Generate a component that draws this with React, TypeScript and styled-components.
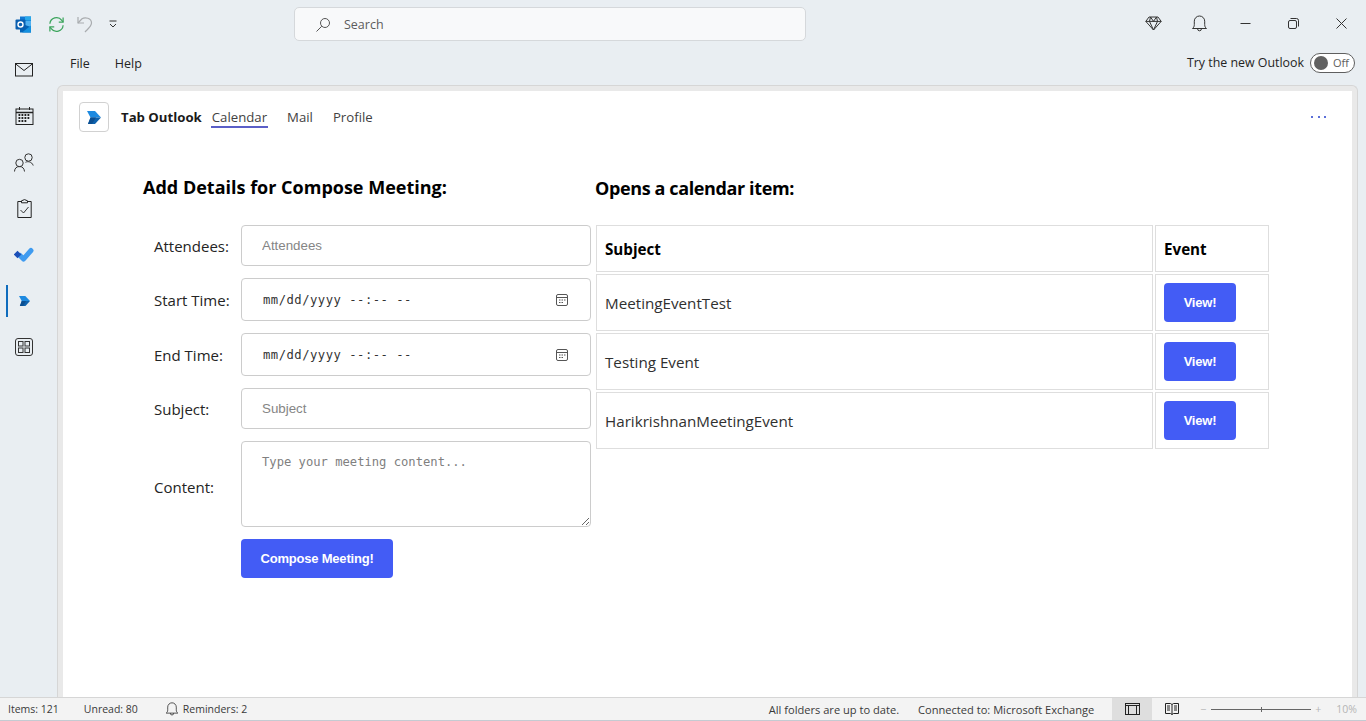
import React from "react";
import styled, { createGlobalStyle } from "styled-components";

const UI_FONT = `"Open Sans", "Noto Sans", "Liberation Sans", sans-serif`;

const GlobalStyle = createGlobalStyle`
  html, body {
    margin: 0;
    padding: 0;
    height: 100%;
    overflow: hidden;
    background: #e9eef2;
    font-family: ${UI_FONT};
  }
  * { box-sizing: border-box; }
`;

const Shell = styled.div`
  width: 1366px;
  height: 721px;
  display: flex;
  flex-direction: column;
  background: #e9eef2;
  color: #242424;
`;

const TitleBar = styled.header`
  height: 44px;
  flex: none;
  display: grid;
  grid-template-columns: 294px 512px 1fr;
  align-items: center;
`;

const QuickAccess = styled.div`
  display: flex;
  align-items: center;
  padding: 4px 0 0 15px;
  svg { display: block; flex: none; }
`;

const QuickSlot = styled.span<{ $gap: number }>`
  margin-right: ${(p) => p.$gap}px;
`;

const SearchBox = styled.div`
  height: 34px;
  margin-top: 4px;
  padding-top: 1px;
  background: #f8f9fa;
  border: 1px solid #d5d8db;
  border-radius: 5px;
  display: flex;
  align-items: center;
  padding-left: 20px;
  gap: 13px;
  font-size: 12.5px;
  color: #5c5c5c;
`;

const WindowControls = styled.div`
  display: flex;
  justify-content: flex-end;
  align-items: center;
  padding: 3px 19px 0 0;
  gap: 37px;
  svg { display: block; }
`;

const TightSlot = styled.span<{ $pull: number }>`
  margin-right: -${(p) => p.$pull}px;
`;

const Body = styled.div`
  flex: 1;
  min-height: 0;
  display: flex;
`;

const Rail = styled.nav`
  width: 57px;
  flex: none;
  display: flex;
  flex-direction: column;
  padding-top: 3px;
`;

const RailItem = styled.div<{ $active?: boolean }>`
  width: 48px;
  height: 46.2px;
  position: relative;
  display: flex;
  align-items: center;
  justify-content: center;
  svg { display: block; }
  ${(p) =>
    p.$active &&
    `&::before {
      content: "";
      position: absolute;
      left: 6px;
      top: 7px;
      width: 2px;
      height: 32px;
      background: #0f6cbd;
    }`}
`;

const Main = styled.div`
  flex: 1;
  min-width: 0;
  display: flex;
  flex-direction: column;
  padding-right: 8px;
`;

const MenuRow = styled.div`
  height: 41px;
  flex: none;
  display: flex;
  align-items: center;
  padding-left: 13px;
  padding-bottom: 3px;
  font-size: 12.5px;
`;

const MenuItem = styled.span`
  margin-right: 25px;
`;

const TryOutlook = styled.div`
  margin-left: auto;
  display: flex;
  align-items: center;
  gap: 6px;
  margin-right: 3px;
  padding-bottom: 1px;
  font-size: 12.4px;
`;

const Toggle = styled.div`
  width: 45px;
  height: 20px;
  border: 1px solid #5f5f5f;
  border-radius: 10px;
  background: #fff;
  display: flex;
  align-items: center;
  padding-left: 3px;
  gap: 5px;
  font-size: 11px;
  color: #616161;
  &::before {
    content: "";
    width: 14px;
    height: 14px;
    border-radius: 50%;
    background: #616161;
  }
`;

const Frame = styled.div`
  flex: 1;
  min-height: 0;
  background: #e9e9e9;
  border: 1px solid #d6d6d6;
  border-bottom: none;
  border-radius: 6px 6px 0 0;
  padding: 5px 5px 0;
  display: flex;
`;

const TabPage = styled.main`
  flex: 1;
  background: #fff;
  display: flex;
  flex-direction: column;
`;

const TabHeader = styled.div`
  height: 52px;
  flex: none;
  display: flex;
  align-items: center;
  padding: 0 26px 0 16px;
`;

const AppTile = styled.div`
  width: 30px;
  height: 30px;
  border: 1px solid #d1d1d1;
  border-radius: 4px;
  display: flex;
  align-items: center;
  justify-content: center;
  margin-right: 12px;
`;

const AppName = styled.span`
  font-size: 13.2px;
  font-weight: 700;
  margin-right: 10px;
  color: #1a1a1a;
`;

const Tab = styled.span<{ $active?: boolean }>`
  position: relative;
  font-size: 13.2px;
  margin-right: 20px;
  color: #424242;
  ${(p) =>
    p.$active &&
    `&::after {
      content: "";
      position: absolute;
      left: -1px;
      right: -1px;
      bottom: -2px;
      height: 2px;
      background: #5b5fc7;
    }`}
`;

const MoreDots = styled.span`
  margin-left: auto;
  display: flex;
  gap: 4.5px;
  i {
    width: 2px;
    height: 2px;
    background: #5b6fd8;
  }
`;

const Content = styled.div`
  display: grid;
  grid-template-columns: 453px 673px;
  padding: 32px 0 0 80px;
`;

const Heading = styled.h2`
  margin: 0;
  height: 50px;
  font-size: 18px;
  line-height: 24px;
  font-weight: 700;
  color: #000;
`;

const RightHeading = styled(Heading)`
  margin-left: -1px;
  margin-top: 1px;
  height: 49px;
  letter-spacing: -0.38px;
`;

const Form = styled.form`
  display: grid;
  grid-template-columns: 98px 350px;
  row-gap: 12px;
  align-items: center;
`;

const Label = styled.label<{ $drop?: number }>`
  padding: ${(p) => p.$drop ?? 0}px 0 0 11px;
  font-size: 15px;
  color: #242424;
`;

const Field = styled.input`
  width: 350px;
  height: 41px;
  border: 1px solid #ccc;
  border-radius: 4px;
  padding: 0 20px;
  background: #fff;
  font-family: "Liberation Sans", sans-serif;
  font-size: 13.33px;
  &::placeholder { color: #858585; opacity: 1; }
`;

const DateBox = styled.div`
  width: 350px;
  height: 43px;
  border: 1px solid #ccc;
  border-radius: 4px;
  background: #fff;
  padding: 0 22px 0 21px;
  display: flex;
  align-items: center;
  justify-content: space-between;
  font-family: "DejaVu Sans Mono", monospace;
  font-size: 12.2px;
  letter-spacing: 0.5px;
  white-space: pre;
  color: #333;
  svg { display: block; }
`;

const Area = styled.textarea`
  width: 350px;
  height: 86px;
  display: block;
  border: 1px solid #ccc;
  border-radius: 4px;
  padding: 13px 20px;
  background: #fff;
  font-family: "DejaVu Sans Mono", monospace;
  font-size: 12.17px;
  &::placeholder { color: #808080; opacity: 1; }
`;

const PrimaryButton = styled.button<{ $w: number }>`
  width: ${(p) => p.$w}px;
  height: 39px;
  border: none;
  border-radius: 4px;
  background: #435cf5;
  color: #fff;
  font-family: "Liberation Sans", sans-serif;
  font-size: 13px;
  letter-spacing: -0.2px;
  font-weight: 700;
  padding: 0;
`;

const Table = styled.div`
  display: grid;
  grid-template-columns: 557px 114px;
  grid-template-rows: 47px;
  grid-auto-rows: 57px;
  gap: 2px;
`;

const Cell = styled.div<{ $head?: boolean }>`
  border: 1px solid #dedede;
  display: flex;
  align-items: center;
  padding: 0 8px;
  font-size: 15.2px;
  font-weight: ${(p) => (p.$head ? 700 : 400)};
  color: ${(p) => (p.$head ? "#000" : "#303030")};
`;

const StatusBar = styled.footer`
  height: 24px;
  flex: none;
  background: #f3f3f3;
  border-top: 1px solid #d6d6d6;
  border-bottom: 1px solid #c4cbd2;
  display: flex;
  align-items: center;
  padding-left: 8px;
  font-size: 10.5px;
  color: #3a3a3a;
  svg { display: block; flex: none; }
`;

const StatusText = styled.span<{ $gap?: number }>`
  margin-right: ${(p) => p.$gap ?? 0}px;
  display: flex;
  align-items: center;
  gap: 4px;
`;

const StatusRight = styled.div`
  margin-left: auto;
  display: flex;
  align-items: center;
  font-size: 11.1px;
`;

const ViewButton = styled.div<{ $on?: boolean }>`
  width: 40px;
  height: 22px;
  display: flex;
  align-items: center;
  justify-content: center;
  background: ${(p) => (p.$on ? "#dedede" : "transparent")};
`;

const Zoom = styled.div`
  display: flex;
  align-items: center;
  padding: 0 9px 0 8px;
  color: #b5b5b5;
  font-size: 10.5px;
`;

const ZoomPercent = styled.span`
  margin-left: 15px;
`;

const ZoomTrack = styled.div`
  width: 100px;
  height: 1px;
  background: #666;
  margin: 0 4px 0 5px;
  position: relative;
  &::after {
    content: "";
    position: absolute;
    left: 50px;
    top: -2px;
    width: 1px;
    height: 5px;
    background: #666;
  }
`;

const OutlookLogo = () => (
  <svg width="17" height="17" viewBox="0 0 17 17">
    <rect x="5" y="0.5" width="11" height="8" fill="#0f78d4" />
    <rect x="10" y="0.5" width="6" height="4" fill="#28a8ea" />
    <rect x="5" y="8" width="11" height="8.5" fill="#0364b8" />
    <path d="M10 5h6v6l-6-2z" fill="#50b0f0" />
    <path d="M7 16.5l9-7v7z" fill="#1490df" />
    <rect x="0.5" y="3.5" width="10" height="10" rx="1" fill="#0a5fb0" />
    <circle cx="5.5" cy="8.5" r="2.5" fill="none" stroke="#fff" strokeWidth="1.4" />
  </svg>
);

const SyncIcon = () => (
  <svg width="17" height="17" viewBox="0 0 18 18" fill="none" stroke="#3aa45b" strokeWidth="1.3">
    <path d="M2 8.2A7 7 0 0 1 14.6 4.6L16 6.2" />
    <path d="M16 1.6v4.8h-4.6" />
    <path d="M16 9.8A7 7 0 0 1 3.4 13.4L2 11.8" />
    <path d="M2 16.4v-4.8h4.6" />
  </svg>
);

const UndoIcon = () => (
  <svg width="16" height="17" viewBox="0 0 16 17" fill="none" stroke="#a9acaf" strokeWidth="1.2">
    <path d="M1 1v6h6" />
    <path d="M1 7L5 2.8C8 0.8 14.5 2 14.5 7c0 3-2.5 5-6.5 9" />
  </svg>
);

const QatMore = () => (
  <svg width="8" height="8" viewBox="0 0 8 8" fill="none" stroke="#333" strokeWidth="1">
    <path d="M0.5 1h7" />
    <path d="M1 4l3 3 3-3" />
  </svg>
);

const SearchIcon = () => (
  <svg width="16" height="16" viewBox="0 0 16 16" fill="none" stroke="#555" strokeWidth="1">
    <circle cx="10" cy="6" r="4.5" />
    <path d="M6.8 9.2L1.5 14.5" />
  </svg>
);

const GemIcon = () => (
  <svg width="17" height="15" viewBox="0 0 17 15" fill="none" stroke="#333" strokeWidth="1">
    <path d="M4 1h9l3.2 4.4L8.500 14 0.800 5.400z" />
    <path d="M0.800 5.400h15.400M5.500 1L4.500 5.400 8.500 14l4-8.600L11.500 1M5.500 1l3 4.400 3-4.400" />
  </svg>
);

const BellIcon = ({ size = 17 }: { size?: number }) => (
  <svg width={size} height={size} viewBox="0 0 17 17" fill="none" stroke="#333" strokeWidth="1">
    <path d="M1.500 13.500c1.200-1 1.800-2 1.800-4V6.200a5.200 5.200 0 0 1 10.400 0V9.500c0 2 .6 3 1.800 4z" />
    <path d="M6.500 13.500a2 2.300 0 0 0 4 0" />
  </svg>
);

const MinimizeIcon = () => (
  <svg width="11" height="11" viewBox="0 0 11 11" stroke="#333">
    <path d="M0.500 5.500h10" />
  </svg>
);

const RestoreIcon = () => (
  <svg width="11" height="11" viewBox="0 0 11 11" fill="none" stroke="#333">
    <rect x="0.500" y="2.500" width="8" height="8" rx="1.500" />
    <path d="M2.500 0.500h6a2 2 0 0 1 2 2v6" />
  </svg>
);

const CloseIcon = () => (
  <svg width="11" height="11" viewBox="0 0 11 11" stroke="#333">
    <path d="M0.500 0.500l10 10M10.500 0.500l-10 10" />
  </svg>
);

const MailIcon = () => (
  <svg width="18" height="14" viewBox="0 0 18 14" fill="none" stroke="#222" strokeWidth="1">
    <rect x="0.500" y="0.500" width="17" height="12.500" />
    <path d="M0.500 0.800L9 7.500l8.500-6.700" />
  </svg>
);

const CalendarIcon = () => (
  <svg width="19" height="18" viewBox="0 0 19 18" fill="none" stroke="#222" strokeWidth="1">
    <rect x="1" y="2" width="17" height="15.500" />
    <path d="M1 5.500h17" strokeWidth="1.500" />
    <path d="M4.500 0v3M14.500 0v3" />
    <path d="M3.500 8h12M3.500 11h12M3.500 14h9" strokeWidth="1.800" strokeDasharray="1.800 1.200" />
  </svg>
);

const PeopleIcon = () => (
  <svg width="20" height="19" viewBox="0 0 20 19" fill="none" stroke="#333" strokeWidth="1">
    <circle cx="5.500" cy="10" r="3.700" />
    <path d="M0.500 18.500c0-3 2-5 5-5s4.800 2 5 5" />
    <circle cx="14.500" cy="4.500" r="3.700" />
    <path d="M11.500 9.300c2-1.200 6.300-.8 7.700 3.200" />
  </svg>
);

const TasksIcon = () => (
  <svg width="15" height="19" viewBox="0 0 15 19" fill="none" stroke="#222" strokeWidth="1">
    <path d="M4.500 2.500H0.800v16h13.400v-16h-3.700" />
    <path d="M4.500 3.800V1.800L7.500 0.600l3 1.200v2z" />
    <path d="M3.500 11l3 3 5-6" strokeWidth="0.900" />
  </svg>
);

const TodoIcon = () => (
  <svg width="21" height="17" viewBox="0 0 21 17">
    <path d="M6 9.500L9.500 13L17 4.500" fill="none" stroke="#3f9bf0" strokeWidth="5" strokeLinecap="round" strokeLinejoin="round" />
    <path d="M3.500 4.700L7.300 8.500 3.500 12.300-0.300 8.500z" fill="#1b4fb8" />
  </svg>
);

const TabAppIcon = ({ size = 14 }: { size?: number }) => (
  <svg width={size} height={size * 13 / 14} viewBox="0 0 14 13">
    <path d="M0 0h8l6 6.500H3.500z" fill="#1e8ae0" />
    <path d="M3.500 6.500H14L8 13H1z" fill="#0f62ad" />
    <path d="M3.500 6.500H9L5 13H1z" fill="#0b4f92" />
  </svg>
);

const AppsIcon = () => (
  <svg width="18" height="18" viewBox="0 0 18 18" fill="none" stroke="#333" strokeWidth="1">
    <rect x="0.500" y="0.500" width="17" height="17" rx="2.500" />
    <rect x="3.500" y="3.500" width="4.500" height="4.500" />
    <rect x="10" y="3.500" width="4.500" height="4.500" />
    <rect x="3.500" y="10" width="4.500" height="4.500" />
    <rect x="10" y="10" width="4.500" height="4.500" />
  </svg>
);

const DatePickerIcon = () => (
  <svg width="12" height="12" viewBox="0 0 12 12" fill="none" stroke="#555">
    <rect x="0.500" y="0.500" width="11" height="11" rx="1.500" />
    <path d="M0.500 3.500h11" />
    <path d="M3 6h1.500M5.500 6H7M8 6h1.500M3 8.500h1.500M5.500 8.500H7" />
  </svg>
);

const NormalViewIcon = () => (
  <svg width="15" height="12" viewBox="0 0 15 12" fill="none" stroke="#222">
    <rect x="0.500" y="0.500" width="14" height="11" />
    <path d="M0.500 2.500h14M3.500 2.500v9M11.500 2.500v9" />
  </svg>
);

const ReadingViewIcon = () => (
  <svg width="14" height="12" viewBox="0 0 14 12" fill="none" stroke="#222">
    <path d="M0.500 0.500h5l1.500 1 1.500-1h5v10h-5L7 11.500 5.500 10.500h-5zM7 1.500v10" />
    <path d="M2 3h3M2 5h3M2 7h3M9 3h3M9 5h3M9 7h3" />
  </svg>
);

const rows = ["MeetingEventTest", "Testing Event", "HarikrishnanMeetingEvent"];

export default function App() {
  return (
    <>
      <GlobalStyle />
      <Shell>
        <TitleBar>
          <QuickAccess>
            <QuickSlot $gap={16}><OutlookLogo /></QuickSlot>
            <QuickSlot $gap={12}><SyncIcon /></QuickSlot>
            <QuickSlot $gap={16}><UndoIcon /></QuickSlot>
            <QatMore />
          </QuickAccess>
          <SearchBox>
            <SearchIcon />
            Search
          </SearchBox>
          <WindowControls>
            <TightSlot $pull={8}><GemIcon /></TightSlot>
            <TightSlot $pull={5}><BellIcon /></TightSlot>
            <MinimizeIcon />
            <RestoreIcon />
            <CloseIcon />
          </WindowControls>
        </TitleBar>
        <Body>
          <Rail>
            <RailItem><MailIcon /></RailItem>
            <RailItem><CalendarIcon /></RailItem>
            <RailItem><PeopleIcon /></RailItem>
            <RailItem><TasksIcon /></RailItem>
            <RailItem><TodoIcon /></RailItem>
            <RailItem $active><TabAppIcon size={11} /></RailItem>
            <RailItem><AppsIcon /></RailItem>
          </Rail>
          <Main>
            <MenuRow>
              <MenuItem>File</MenuItem>
              <MenuItem>Help</MenuItem>
              <TryOutlook>
                Try the new Outlook
                <Toggle>Off</Toggle>
              </TryOutlook>
            </MenuRow>
            <Frame>
              <TabPage>
                <TabHeader>
                  <AppTile><TabAppIcon /></AppTile>
                  <AppName>Tab Outlook</AppName>
                  <Tab $active>Calendar</Tab>
                  <Tab>Mail</Tab>
                  <Tab>Profile</Tab>
                  <MoreDots><i /><i /><i /></MoreDots>
                </TabHeader>
                <Content>
                  <section>
                    <Heading>Add Details for Compose Meeting:</Heading>
                    <Form>
                      <Label>Attendees:</Label>
                      <Field placeholder="Attendees" />
                      <Label>Start Time:</Label>
                      <DateBox>mm/dd/yyyy --:-- --<DatePickerIcon /></DateBox>
                      <Label>End Time:</Label>
                      <DateBox>mm/dd/yyyy --:-- --<DatePickerIcon /></DateBox>
                      <Label>Subject:</Label>
                      <Field placeholder="Subject" />
                      <Label $drop={6}>Content:</Label>
                      <Area placeholder="Type your meeting content..." />
                      <span />
                      <PrimaryButton $w={152} type="button">Compose Meeting!</PrimaryButton>
                    </Form>
                  </section>
                  <section>
                    <RightHeading>Opens a calendar item:</RightHeading>
                    <Table>
                      <Cell $head>Subject</Cell>
                      <Cell $head>Event</Cell>
                      {rows.map((row) => (
                        <React.Fragment key={row}>
                          <Cell>{row}</Cell>
                          <Cell>
                            <PrimaryButton $w={72} type="button">View!</PrimaryButton>
                          </Cell>
                        </React.Fragment>
                      ))}
                    </Table>
                  </section>
                </Content>
              </TabPage>
            </Frame>
          </Main>
        </Body>
        <StatusBar>
          <StatusText $gap={25}>Items: 121</StatusText>
          <StatusText $gap={27}>Unread: 80</StatusText>
          <StatusText>
            <BellIcon size={14} />
            Reminders: 2
          </StatusText>
          <StatusRight>
            <StatusText $gap={19}>All folders are up to date.</StatusText>
            <StatusText $gap={18}>Connected to: Microsoft Exchange</StatusText>
            <ViewButton $on><NormalViewIcon /></ViewButton>
            <ViewButton><ReadingViewIcon /></ViewButton>
            <Zoom>
              −
              <ZoomTrack />
              +
              <ZoomPercent>10%</ZoomPercent>
            </Zoom>
          </StatusRight>
        </StatusBar>
      </Shell>
    </>
  );
}
